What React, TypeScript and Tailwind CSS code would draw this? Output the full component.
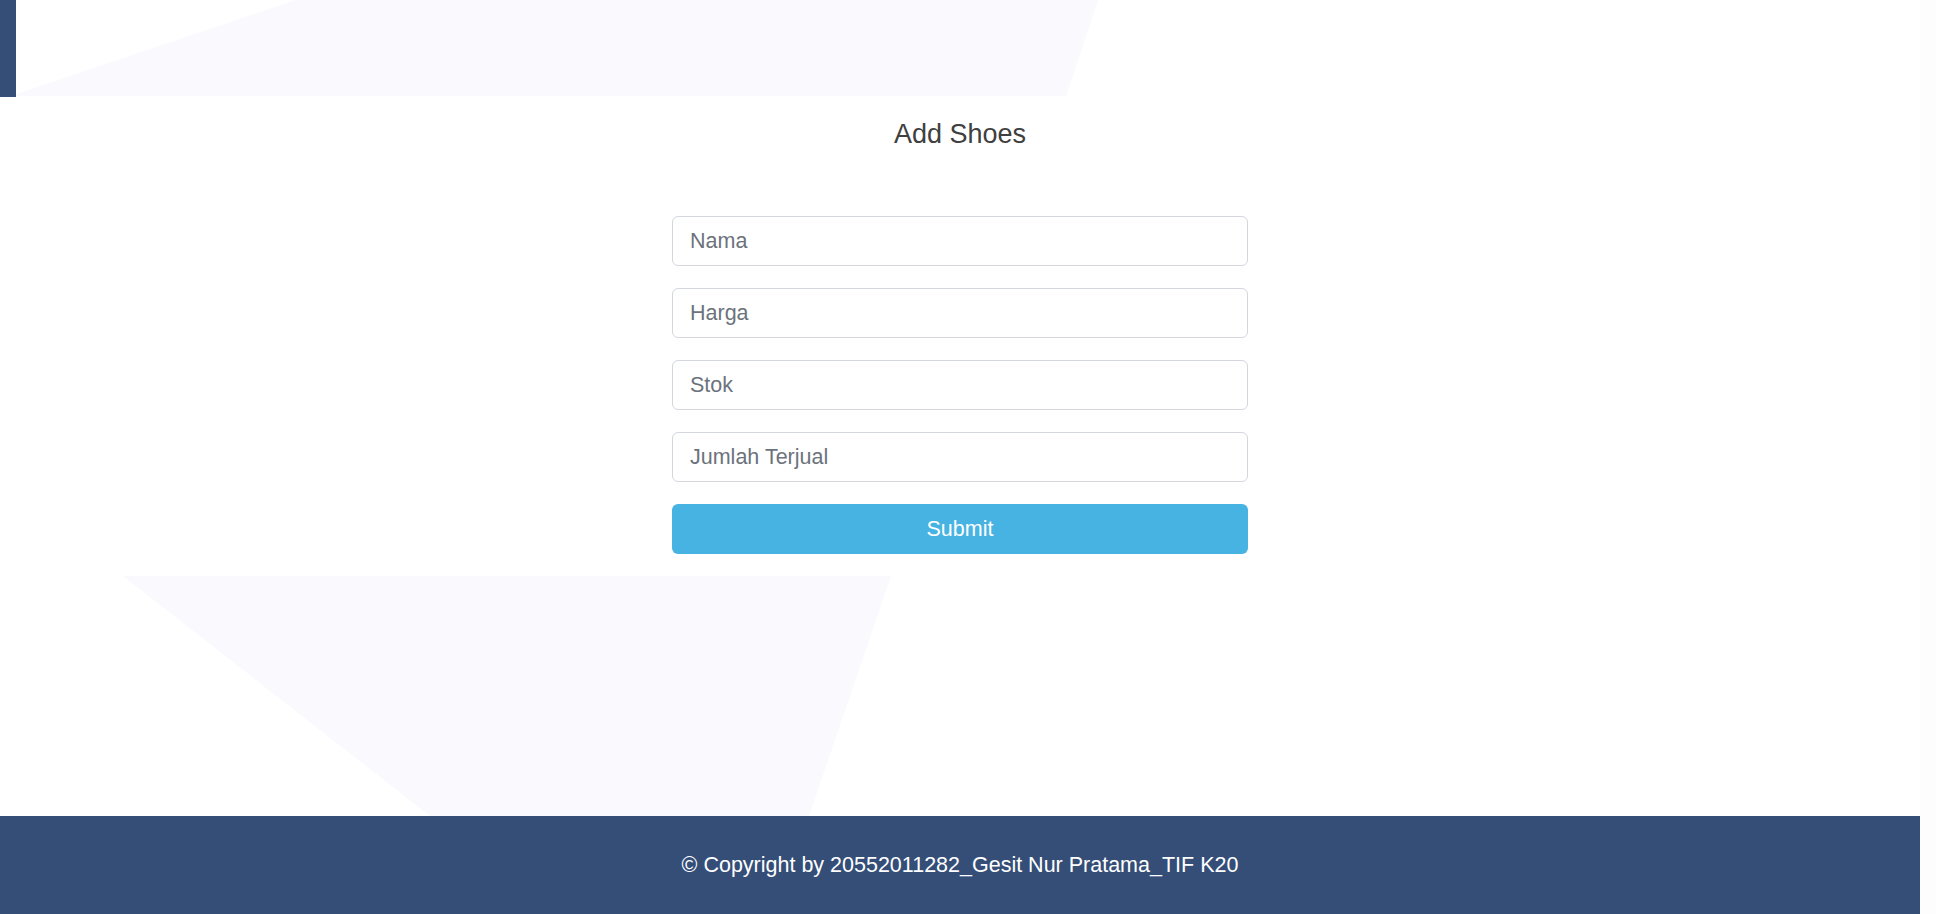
import React from 'react';

const fields = ['Nama', 'Harga', 'Stok', 'Jumlah Terjual'];

function TopShape() {
  return (
    <svg className="absolute inset-0 h-full w-full" viewBox="0 0 1920 96" preserveAspectRatio="none">
      <polygon points="296,0 1098,0 1066,96 10,96" fill="#f9f9fe" />
    </svg>
  );
}

function BottomShape() {
  return (
    <svg className="absolute left-0 bottom-0 h-[240px] w-[1920px]" viewBox="0 0 1920 240" preserveAspectRatio="none">
      <polygon points="123,0 891,0 809,240 430,240" fill="#f9f9fe" />
    </svg>
  );
}

function App() {
  return (
    <div className="flex h-[914px] w-full bg-white font-['Liberation_Sans',Arial,sans-serif]">
      <div className="flex w-[1920px] flex-col">
        <header className="relative h-[96px] shrink-0">
          <TopShape />
          <div className="relative h-[97px] w-[16px] bg-[#344e78]" />
        </header>

        <main className="relative flex-1">
          <BottomShape />
          <div className="relative flex flex-col items-center pt-[25px]">
            <h1 className="text-[27px] leading-none text-[#404040]">Add Shoes</h1>
            <form className="mt-[68px] flex w-[576px] flex-col gap-[22px]" onSubmit={(e) => e.preventDefault()}>
              {fields.map((f) => (
                <input
                  key={f}
                  type="text"
                  placeholder={f}
                  className="h-[50px] w-full rounded-md border border-[#d3d6dc] bg-white px-[17px] text-[21.5px] text-[#495057] outline-none placeholder:text-[#6c737d]"
                />
              ))}
              <button type="submit" className="h-[50px] w-full rounded-md bg-[#47b3e3] text-[21.5px] text-white">
                Submit
              </button>
            </form>
          </div>
        </main>

        <footer className="flex h-[98px] shrink-0 items-center justify-center bg-[#344e78]">
          <p className="text-[21.5px] text-white">© Copyright by 20552011282_Gesit Nur Pratama_TIF K20</p>
        </footer>
      </div>
      <div className="w-[16px] bg-[#fdfdfd]" />
    </div>
  );
}

export default App;
